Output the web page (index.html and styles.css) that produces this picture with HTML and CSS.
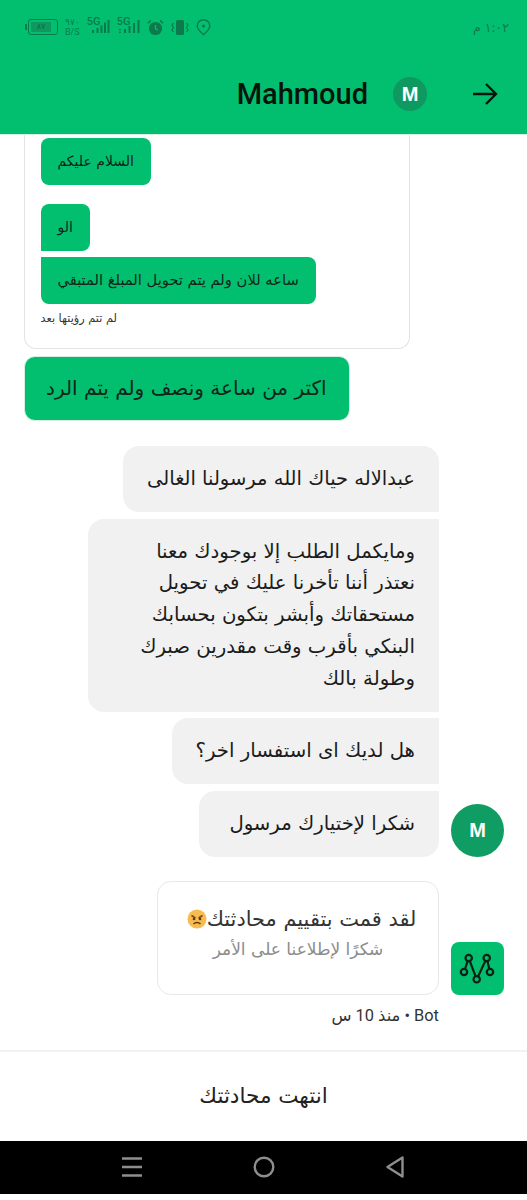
FILE: index.html
```html
<!DOCTYPE html>
<html lang="ar" dir="rtl">
<head>
  <meta charset="UTF-8" />
  <meta name="viewport" content="width=device-width, initial-scale=1.0" />
  <title>Mahmoud</title>
  <link rel="stylesheet" href="styles.css">
</head>
<body>
  <div class="header">
    <div class="status-bar">
      <span class="clock">١:٠٢ م</span>
      <div class="status-icons">
        <div class="battery">
          <span class="battery-level">٨٧</span>
        </div>
        <div class="speed"><span>٩٧٠</span><span>B/S</span></div>
        <div class="signal">
          <span class="five-g">5G</span>
          <svg width="23" height="17" viewBox="0 0 23 17">
            <path d="M6 13v3M10.500 11v5M14.500 8.500v7.500M18 5.500v10.500M21.500 3v13" stroke="#0c7a4c" stroke-width="2"/>
          </svg>
        </div>
        <div class="signal">
          <span class="five-g">5G</span>
          <svg width="23" height="17" viewBox="0 0 23 17">
            <path d="M3 12v1.200M3 14.800v1.200M8 12v4M12.500 9v7M17 6v10M21.500 3v13" stroke="#0c7a4c" stroke-width="2"/>
          </svg>
        </div>
        <svg width="17" height="17" viewBox="0 0 17 17">
          <circle cx="8.500" cy="9.500" r="6.600" fill="#0c7a4c"/>
          <path d="M8.500 6v3.800l2.400 1.400" fill="none" stroke="#02bf6f" stroke-width="1.300"/>
          <path d="M1 4.200 3.800 1.400M16 4.200 13.200 1.400" stroke="#0c7a4c" stroke-width="1.500"/>
        </svg>
        <svg width="18" height="17" viewBox="0 0 18 17">
          <rect x="5" y="1" width="8" height="15" rx="1.500" fill="#0c7a4c"/>
          <path d="M2.500 4 1 6l1.500 2.500L1 11l1.500 2M15.500 4 17 6l-1.500 2.500L17 11l-1.500 2" fill="none" stroke="#0c7a4c" stroke-width="1.200"/>
        </svg>
        <svg width="15" height="17" viewBox="0 0 15 17">
          <path d="M7.500 15.800C4 12.600 1.200 10 1.200 7a6.300 6.300 0 0 1 12.600 0c0 3-2.800 5.600-6.300 8.800Z" fill="none" stroke="#0c7a4c" stroke-width="1.400"/>
          <circle cx="7.500" cy="7" r="1.500" fill="#0c7a4c"/>
        </svg>
      </div>
    </div>
    <div class="title-bar">
      <svg class="back" width="26" height="24" viewBox="0 0 26 24">
        <path d="M1 12h23M14 2l10 10-10 10" fill="none" stroke="#06140d" stroke-width="2.400"/>
      </svg>
      <div class="head-avatar">M</div>
      <div class="name">Mahmoud</div>
    </div>
  </div>

  <div class="chat">
    <div class="quote-card">
      <div class="msg green first">السلام عليكم</div>
      <div class="msg green middle">الو</div>
      <div class="msg green last">ساعه للان ولم يتم تحويل المبلغ المتبقي</div>
      <div class="seen">لم تتم رؤيتها بعد</div>
    </div>
    <div class="big-msg">اكتر من ساعة ونصف ولم يتم الرد</div>

    <div class="row agent-row">
      <div class="user-avatar">M</div>
      <div class="bubbles">
        <div class="bubble top">عبدالاله حياك الله مرسولنا الغالى</div>
        <div class="bubble mid long">ومايكمل الطلب إلا بوجودك معنا نعتذر أننا تأخرنا عليك في تحويل مستحقاتك وأبشر بتكون بحسابك البنكي بأقرب وقت مقدرين صبرك وطولة بالك</div>
        <div class="bubble mid">هل لديك اى استفسار اخر؟</div>
        <div class="bubble end">شكرا لإختيارك مرسول</div>
      </div>
    </div>

    <div class="row bot-row">
      <div class="bot-avatar">
        <svg width="53" height="53" viewBox="0 0 53 53">
          <path d="M13 30 17.700 16 25.700 37.300 35.700 16 39 30" fill="none" stroke="#0a2015" stroke-width="2.200"/>
          <g fill="#02bf6f" stroke="#0a2015" stroke-width="2.200">
            <circle cx="17.700" cy="16" r="3.200"/>
            <circle cx="35.700" cy="16" r="3.200"/>
            <circle cx="13" cy="30" r="3.200"/>
            <circle cx="25.700" cy="37.300" r="3.200"/>
            <circle cx="39" cy="30" r="3.200"/>
          </g>
        </svg>
      </div>
      <div class="rating-card">
        <div class="rating-title">لقد قمت بتقييم محادثتك<svg class="emoji" width="20" height="20" viewBox="0 0 20 20">
            <circle cx="10" cy="10" r="9.500" fill="#f7bb4e"/>
            <path d="M4.500 6.500 8.500 9M15.500 6.500 11.500 9" stroke="#7a4a1a" stroke-width="1.500"/>
            <circle cx="7" cy="10" r="1.300" fill="#5c3a18"/>
            <circle cx="13" cy="10" r="1.300" fill="#5c3a18"/>
            <path d="M6.500 15c2-2 5-2 7 0" fill="none" stroke="#5c3a18" stroke-width="1.500"/>
          </svg></div>
        <div class="rating-sub">شكرًا لإطلاعنا على الأمر</div>
      </div>
    </div>
    <div class="meta">Bot • منذ 10 س</div>
  </div>

  <div class="footer">انتهت محادثتك</div>

  <div class="nav-bar">
    <svg width="20" height="22" viewBox="0 0 20 22">
      <path d="M0 2.500h20M0 11h20M0 19.500h20" stroke="#8e8e8e" stroke-width="2.400"/>
    </svg>
    <svg width="22" height="22" viewBox="0 0 22 22">
      <circle cx="11" cy="11" r="9.300" fill="none" stroke="#8e8e8e" stroke-width="2.400"/>
    </svg>
    <svg width="18" height="22" viewBox="0 0 18 22">
      <path d="M16.500 1.500v19L1.500 11Z" fill="none" stroke="#8e8e8e" stroke-width="2.400" stroke-linejoin="round"/>
    </svg>
  </div>
</body>
</html>
```
FILE: styles.css
```css
body {
  margin: 0;
  width: 527px;
  height: 1200px;
  overflow: hidden;
  background-color: #fff;
  font-family: "DejaVu Sans", sans-serif;
  color: #1c1c1c;
}
.header {
  height: 135px;
  background-color: #02bf6f;
  border-bottom: 1px solid #d8eee3;
  box-sizing: border-box;
}
.status-bar {
  display: flex;
  justify-content: space-between;
  align-items: center;
  height: 54px;
  padding: 0 18px 0 25px;
}
.clock {
  font-size: 12.500px;
  color: #0c7a4c;
}
.status-icons {
  direction: ltr;
  display: flex;
  align-items: center;
  gap: 7px;
}
.battery {
  position: relative;
  box-sizing: border-box;
  width: 30px;
  height: 16px;
  margin-left: 3px;
  padding: 2px;
  border: 1.300px solid #0c7a4c;
  border-radius: 3px;
}
.battery::before {
  content: "";
  position: absolute;
  left: -4px;
  top: 4px;
  width: 1.600px;
  height: 6px;
  background-color: #0c7a4c;
}
.battery-level {
  display: block;
  width: 20px;
  height: 100%;
  background-color: #0f9960;
  font-size: 8px;
  line-height: 10px;
  text-align: center;
  color: #0c6a43;
}
.speed {
  display: flex;
  flex-direction: column;
  align-items: center;
  font-family: Roboto, "DejaVu Sans", sans-serif;
  font-size: 9px;
  line-height: 10px;
  color: #0c7a4c;
}
.signal {
  position: relative;
}
.five-g {
  position: absolute;
  left: 0;
  top: -2px;
  font-family: Roboto, sans-serif;
  font-size: 11px;
  font-weight: 500;
  color: #0c7a4c;
}
.title-bar {
  display: flex;
  align-items: center;
  height: 80px;
  padding-right: 29px;
}
.back {
  margin-left: 45px;
}
.head-avatar {
  width: 34px;
  height: 34px;
  border-radius: 50%;
  background-color: #0f9960;
  color: #fff;
  font-family: "Liberation Sans", sans-serif;
  font-size: 20px;
  font-weight: bold;
  line-height: 34px;
  text-align: center;
  margin-left: 25px;
}
.name {
  font-family: Roboto, sans-serif;
  font-size: 29px;
  font-weight: 500;
  color: #06140d;
}
.chat {
  display: flex;
  flex-direction: column;
  height: 915px;
  box-sizing: border-box;
}
.quote-card {
  align-self: flex-end;
  display: flex;
  flex-direction: column;
  align-items: flex-end;
  box-sizing: border-box;
  width: 386px;
  height: 214px;
  margin-left: 24px;
  padding: 3px 17px 0 15.500px;
  border: 1.500px solid #e3e3e3;
  border-top: none;
  border-radius: 0 0 12px 12px;
}
.msg {
  box-sizing: border-box;
  height: 47px;
  padding: 0 17px;
  line-height: 46px;
  font-size: 14px;
  background-color: #02bf6f;
  color: #10261b;
  border-radius: 8px;
}
.msg.first {
  margin-bottom: 19px;
}
.msg.middle {
  border-bottom-left-radius: 0;
  margin-bottom: 6px;
}
.msg.last {
  font-size: 14.700px;
  border-top-left-radius: 0;
}
.seen {
  font-size: 11.300px;
  margin-top: 8px;
  color: #333;
}
.big-msg {
  align-self: flex-end;
  box-sizing: border-box;
  height: 65px;
  margin: 7px 0 0 24px;
  padding: 0 22px 0 21px;
  line-height: 63px;
  font-size: 20px;
  background-color: #02bf6f;
  color: #10261b;
  border: 1px solid #d6efe2;
  border-radius: 11px;
}
.row {
  display: flex;
  align-items: flex-end;
  gap: 12px;
  padding-right: 23px;
}
.agent-row {
  margin-top: 25px;
}
.bot-row {
  margin-top: 24px;
}
.bubbles {
  display: flex;
  flex-direction: column;
  align-items: flex-start;
  gap: 6.800px;
}
.bubble {
  box-sizing: border-box;
  max-width: 351px;
  padding: 17px 24px;
  font-size: 19.700px;
  line-height: 31.800px;
  background-color: #f1f1f1;
  border-radius: 16px;
}
.bubble.long {
  width: 351px;
  padding-left: 40px;
}
.bubble.top {
  font-size: 19.500px;
  border-bottom-right-radius: 0;
}
.bubble.mid {
  border-top-right-radius: 0;
  border-bottom-right-radius: 0;
}
.bubble.end {
  padding-left: 30px;
  border-top-right-radius: 0;
}
.user-avatar {
  width: 53px;
  height: 53px;
  flex: none;
  border-radius: 50%;
  background-color: #0f9d63;
  color: #fff;
  font-family: "Liberation Sans", sans-serif;
  font-size: 20px;
  font-weight: bold;
  line-height: 53px;
  text-align: center;
}
.bot-avatar {
  width: 53px;
  height: 53px;
  flex: none;
  border-radius: 8px;
  background-color: #02bf6f;
}
.rating-card {
  box-sizing: border-box;
  width: 282px;
  height: 114px;
  padding-top: 22px;
  border: 1.500px solid #e8e8e8;
  border-radius: 14px;
  text-align: center;
}
.rating-title {
  display: flex;
  align-items: center;
  justify-content: center;
  padding-left: 7px;
  font-size: 20.900px;
  line-height: 30px;
  color: #333;
}
.rating-sub {
  font-size: 17px;
  line-height: 30px;
  color: #8c8c8c;
}
.meta {
  padding: 11px 88px 0 0;
  font-family: Roboto, "DejaVu Sans", sans-serif;
  font-size: 16.400px;
  color: #333;
}
.footer {
  position: absolute;
  left: 0;
  right: 0;
  top: 1050px;
  height: 91px;
  box-sizing: border-box;
  border-top: 2px solid #f2f2f2;
  line-height: 87px;
  font-size: 21.500px;
  text-align: center;
  color: #222;
}
.nav-bar {
  position: absolute;
  left: 0;
  right: 0;
  top: 1141px;
  height: 53px;
  direction: ltr;
  display: flex;
  align-items: center;
  justify-content: space-between;
  padding: 0 123px 2px 122px;
  box-sizing: border-box;
  background-color: #000;
}
```
